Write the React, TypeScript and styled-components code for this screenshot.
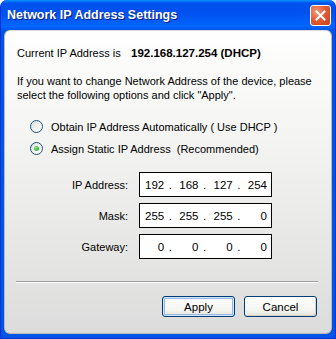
import React from "react";
import styled, { createGlobalStyle } from "styled-components";

const GlobalStyle = createGlobalStyle`
  html, body {
    margin: 0;
    padding: 0;
    background: #ffffff;
  }
  body {
    font-family: "Liberation Sans", Arial, sans-serif;
    font-size: 11px;
    color: #000;
  }
`;

const Window = styled.div`
  width: 336px;
  height: 339px;
  box-sizing: border-box;
  display: flex;
  flex-direction: column;
  background: #0055e5;
  border: 1px solid #0831d9;
  border-top: none;
  border-radius: 7px 7px 0 0;
  overflow: hidden;
`;

const TitleBar = styled.div`
  height: 30px;
  flex: none;
  display: flex;
  align-items: center;
  justify-content: space-between;
  padding: 0 4px 0 6px;
  background: linear-gradient(
    #0997ff 0%,
    #0053ee 10%,
    #0050ee 40%,
    #0066ff 88%,
    #0055e5 100%
  );
  border-radius: 7px 7px 0 0;
`;

const Title = styled.span`
  color: #fff;
  font-family: "Liberation Sans", Arial, sans-serif;
  font-weight: bold;
  font-size: 12.5px;
  text-shadow: 1px 1px 0 #0a1883;
`;

const CloseButton = styled.div`
  width: 21px;
  height: 21px;
  box-sizing: border-box;
  border: 1px solid #fff;
  border-radius: 3px;
  background: radial-gradient(circle at 30% 30%, #f29b7c 0%, #e35b33 45%, #c4411e 100%);
  display: flex;
  align-items: center;
  justify-content: center;
`;

const Panel = styled.div`
  flex: 1;
  margin: 0 3px 4px 3px;
  display: flex;
  flex-direction: column;
  background: linear-gradient(#ffffff 0%, #f4f4f2 35%, #dcdcdc 100%);
  border: 1px solid #b9b9b9;
  border-top-color: #dcdcdc;
  border-radius: 6px;
  padding: 0 13px 0 11px;
`;

const InfoRow = styled.div`
  display: flex;
  align-items: center;
  margin-top: 15px;
  padding-left: 1px;
  height: 14px;
`;

const InfoLabel = styled.span`
  width: 114px;
`;

const InfoValue = styled.span`
  font-weight: bold;
  font-size: 11.5px;
`;

const Message = styled.p`
  margin: 14px 0 0 0;
  padding-left: 1px;
  line-height: 14px;
`;

const RadioGroup = styled.div`
  display: flex;
  flex-direction: column;
  gap: 9px;
  margin-top: 18px;
  padding-left: 14px;
`;

const RadioRow = styled.label`
  display: flex;
  align-items: center;
  gap: 8px;
  height: 13px;
`;

const RadioCircle = styled.span<{ $checked?: boolean }>`
  width: 13px;
  height: 13px;
  box-sizing: border-box;
  border-radius: 50%;
  border: 1px solid #1c5180;
  background: linear-gradient(135deg, #dcdcd6 0%, #f6f6f4 60%, #ffffff 100%);
  display: flex;
  align-items: center;
  justify-content: center;
  &::after {
    content: "";
    width: 5px;
    height: 5px;
    border-radius: 50%;
    background: ${(p) => (p.$checked ? "radial-gradient(circle at 35% 35%, #7be37b, #21a121)" : "transparent")};
  }
`;

const FieldGrid = styled.div`
  display: grid;
  grid-template-columns: 112px 133px;
  column-gap: 11px;
  row-gap: 6px;
  align-items: center;
  margin-top: 17px;
`;

const FieldLabel = styled.span`
  text-align: right;
`;

const IpBox = styled.div`
  height: 25px;
  box-sizing: border-box;
  border: 1px solid #000;
  background: #fff;
  display: grid;
  grid-template-columns: 1fr 12px 1fr 12px 1fr 12px 1fr;
  align-items: center;
  padding: 0 4px 0 2px;
  font-size: 11.5px;
`;

const Octet = styled.span`
  text-align: right;
`;

const Dot = styled.span`
  text-align: center;
`;

const Separator = styled.hr`
  margin: 22px 0 0 0;
  border: none;
  border-top: 1px solid #9d9d9d;
  border-bottom: 1px solid #ffffff;
  height: 0;
`;

const ButtonRow = styled.div`
  display: flex;
  justify-content: flex-end;
  gap: 9px;
  margin-top: 13px;
  padding-right: 1px;
`;

const Button = styled.button<{ $default?: boolean }>`
  width: 73px;
  height: 21px;
  box-sizing: border-box;
  font-family: "Liberation Sans", Arial, sans-serif;
  font-size: 11.5px;
  color: #000;
  border: 1px solid #003c74;
  border-radius: 3px;
  background: linear-gradient(#ffffff 0%, #f4f4f0 70%, #e3e3db 100%);
  box-shadow: ${(p) =>
    p.$default
      ? "inset 0 0 0 1px #cee7ff, inset 0 0 0 2px #98b8ea"
      : "inset -1px -1px 0 #d6d0c5"};
  padding: 0;
`;

function CloseIcon() {
  return (
    <svg width="11" height="11" viewBox="0 0 11 11">
      <path d="M1.5 1.5 L9.5 9.5 M9.5 1.5 L1.5 9.5" stroke="#fff" strokeWidth="2" strokeLinecap="square" />
    </svg>
  );
}

const fields: { label: string; octets: string[] }[] = [
  { label: "IP Address:", octets: ["192", "168", "127", "254"] },
  { label: "Mask:", octets: ["255", "255", "255", "0"] },
  { label: "Gateway:", octets: ["0", "0", "0", "0"] },
];

export default function App() {
  return (
    <>
      <GlobalStyle />
      <Window>
        <TitleBar>
          <Title>Network IP Address Settings</Title>
          <CloseButton>
            <CloseIcon />
          </CloseButton>
        </TitleBar>
        <Panel>
          <InfoRow>
            <InfoLabel>Current IP Address is</InfoLabel>
            <InfoValue>192.168.127.254 (DHCP)</InfoValue>
          </InfoRow>
          <Message>
            If you want to change Network Address of the device, please
            <br />
            select the following options and click "Apply".
          </Message>
          <RadioGroup>
            <RadioRow>
              <RadioCircle />
              Obtain IP Address Automatically ( Use DHCP )
            </RadioRow>
            <RadioRow>
              <RadioCircle $checked />
              Assign Static IP Address&nbsp; (Recommended)
            </RadioRow>
          </RadioGroup>
          <FieldGrid>
            {fields.map((f) => (
              <React.Fragment key={f.label}>
                <FieldLabel>{f.label}</FieldLabel>
                <IpBox>
                  <Octet>{f.octets[0]}</Octet>
                  <Dot>.</Dot>
                  <Octet>{f.octets[1]}</Octet>
                  <Dot>.</Dot>
                  <Octet>{f.octets[2]}</Octet>
                  <Dot>.</Dot>
                  <Octet>{f.octets[3]}</Octet>
                </IpBox>
              </React.Fragment>
            ))}
          </FieldGrid>
          <Separator />
          <ButtonRow>
            <Button $default>Apply</Button>
            <Button>Cancel</Button>
          </ButtonRow>
        </Panel>
      </Window>
    </>
  );
}
